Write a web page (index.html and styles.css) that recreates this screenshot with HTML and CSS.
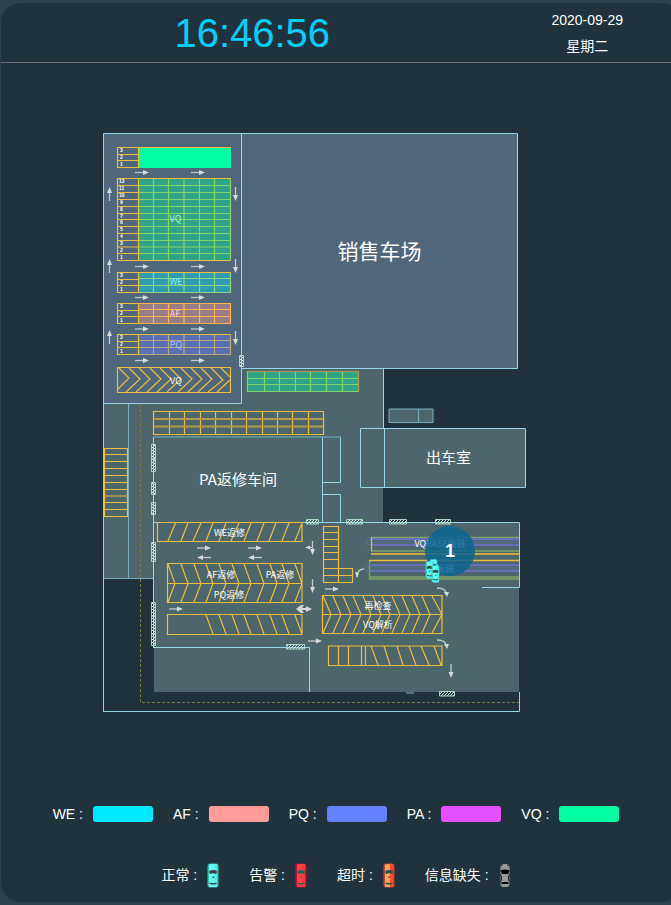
FILE: index.html
```html
<!DOCTYPE html>
<html lang="zh-CN">
<head>
<meta charset="utf-8">
<meta name="viewport" content="width=device-width, initial-scale=1">
<title>停车场监控</title>
<link rel="stylesheet" href="styles.css">
</head>
<body>
<main class="panel">
  <header class="header">
    <time class="clock">16:46:56</time>
    <div class="date"><span>2020-09-29</span><span>星期二</span></div>
  </header>

  <svg class="map" viewBox="1 63 670 727" role="img" aria-label="停车场平面图">
    <defs>
      <pattern id="hatch" width="3" height="3" patternUnits="userSpaceOnUse">
        <path d="M0 3L3 0" stroke="#d6f2df" stroke-width="1"/>
      </pattern>
      <g id="right"><path d="M0 0H9" class="arrow-line"/><path d="M8 -2.500L14 0L8 2.500Z"/></g>
      <g id="turn"><path d="M0 0Q9 0 9 6" class="arrow-line"/><path d="M7 4L12 4L10 9Z"/></g>
      <g id="aisle"><use href="#right" x="135"/><use href="#right" x="191"/></g>
      <g id="nums3"><text x="120" y="5">3</text><text x="120" y="12">2</text><text x="120" y="19">1</text></g>
      <path id="cells" d="M153.500 0V20M168.500 0V20M184 0V20M199.500 0V20M214.500 0V20M139 6.500H231M139 13.500H231"/>
      <path id="stub" d="M117.500 .5H138.500V20.500H117.500ZM117.500 7.500H138.500M117.500 13.500H138.500"/>
      <symbol id="car" viewBox="0 0 12 25">
        <rect x=".5" y=".5" width="11" height="24" rx="2.500" fill="var(--edge)"/>
        <rect x="2" y="1" width="8" height="23" rx="1.500" fill="var(--body)"/>
        <path d="M7 1H10V24H7Z" fill="var(--side)"/>
        <path d="M2 9Q2 7 6 7T10 9L9 11Q6 9.500 3 11Z" fill="var(--glass)"/>
        <path d="M2.500 19.500Q6 20.500 9.500 19.500V21Q6 22 2.500 21Z" fill="var(--glass)"/>
        <rect x="5.500" y="13.500" width="1.500" height="1.500" fill="var(--glass)"/>
      </symbol>
    </defs>

    <!-- floor areas -->
    <path class="lower" d="M104 403H242V368H383V522H519V692H154V578H104Z"/>
    <path class="upper" d="M104 134H517V368H242V403H104Z"/>
    <path class="lower" d="M360.500 428.500H525V488H360.500ZM389 409H433V422H389Z"/>

    <!-- walls -->
    <path class="wall" d="M103.500 711.500V133.500H517.500V368.500H241.500M241.500 134V403.500H104M383.500 368V428M360.500 428.500H525.500V487.500H360.500ZM384.500 428V488M153.500 647V437M322.500 437V522M340.500 437V482.500H323M323 494.500H340.500V522M153 522.500H519.500V587.500H482M153 647.500H309.500V692M103 711.500H519.500V692"/>
    <path class="wall dim" d="M128.500 404V578M104 578.500H153M153 437H341M389 409H433V422.500H389ZM418.500 409V422M406 693H414"/>
    <path class="guide" d="M140.500 404V702.500H519"/>

    <!-- north-west stalls -->
    <path class="vq-solid" d="M139 147H231V168H139Z"/>
    <use href="#stub" y="147" class="line"/>
    <path class="line" d="M139 147.500H231"/>
    <path class="vq" d="M139 178H231V260H139Z"/>
    <path class="line vq-line" d="M153.500 179V260M168.500 179V260M184 179V260M199.500 179V260M214.500 179V260M230.500 179V260M139 185.500H231M139 192.500H231M139 199.500H231M139 206.500H231M139 213.500H231M139 219.500H231M139 226.500H231M139 233.500H231M139 240.500H231M139 247H231M139 253.500H231"/>
    <path class="line" d="M231 178.500H117.500V260.500H231M138.500 178V260M117 185.500H139M117 192.500H139M117 199.500H139M117 206.500H139M117 213.500H139M117 219.500H139M117 226.500H139M117 233.500H139M117 240.500H139M117 247H139M117 253.500H139"/>
    <path class="we" d="M139 272H231V292H139Z"/>
    <use href="#cells" y="272" class="line we-line"/>
    <use href="#stub" y="272" class="line"/><path class="line we-line" d="M139 292.500H230.500V272"/><path class="line" d="M139 272.500H231"/>
    <path class="af" d="M139 303H231V323H139Z"/>
    <use href="#cells" y="303" class="line af-line"/>
    <use href="#stub" y="303" class="line"/><path class="line af-line" d="M139 303.500H230.500V323.500H139"/>
    <path class="pq" d="M139 334H231V355H139Z"/>
    <use href="#cells" y="334" class="line pq-line"/>
    <use href="#stub" y="334" class="line"/><path class="line pq-line" d="M139 354.500H230.500V334"/><path class="line" d="M139 334.500H231"/>
    <path class="line" d="M117.500 367.500H230.500V392.500H117.500ZM119 368L129 378L118 389M129 368L140 379L126 392M139 368L150 379L136 392M150 368L161 379L147 392M160 368L171 379L157 392M170 368L181 379L167 392M181 368L192 379L178 392M191 368L202 379L188 392M201 368L212 379L198 392M211 368L223 380L208 392M221 368L230 377M230 380L217 392"/>
    <g class="number">
      <use href="#nums3" y="147"/><use href="#nums3" y="272"/><use href="#nums3" y="303"/><use href="#nums3" y="334"/>
      <text x="119" y="183">12</text><text x="119" y="190">11</text><text x="119" y="197">10</text>
      <text x="120" y="204">9</text><text x="120" y="211">8</text><text x="120" y="218">7</text>
      <text x="120" y="224">6</text><text x="120" y="231">5</text><text x="120" y="238">4</text>
      <text x="120" y="245">3</text><text x="120" y="252">2</text><text x="120" y="259">1</text>
    </g>

    <!-- middle stalls -->
    <path class="vq" d="M248 372H358V391H248Z"/>
    <path class="line vq-line" d="M264.500 372V391M279.500 372V391M295.500 372V391M310.500 372V391M326.500 372V391M342.500 372V391M248 378.500H358M248 384.500H358M247.500 372V391.500H358"/>
    <path class="line dark" d="M247 371.500H358.500V392"/>
    <path class="line" d="M153.500 411.500H323.500V434.500H153.500ZM169.500 411V434M184.500 411V434M200.500 411V434M215.500 411V434M231.500 411V434M246.500 411V434M262.500 411V434M277.500 411V434M292.500 411V434M308.500 411V434"/>
    <path class="line dark wide" d="M154 419H323M154 426.500H323"/>
    <path class="line" d="M104.500 448.500H127.500V516.500H104.500ZM104 454.500H128M104 461.500H128M104 468.500H128M104 475.500H128M104 482.500H128M104 489.500H128M104 496H128M104 502.500H128M104 509.500H128"/>

    <!-- repair stalls -->
    <path class="line" d="M157.500 522.500H302V541.500H157.500ZM168 541L175.500 523M181 541L188 523M193 541L201 523M206 541L213 523M219 541L226 523M231 541L239 523M244 541L251 523M257 541L264 523M269 541L276 523M282 541L289 523M295 541L302 523"/>
    <path class="line" d="M167.500 563.500H302V602.500H167.500ZM168 583.500H302M168 564L175 583.500L168 602M181 564L188 583.500L181 602M194 564L201 583.500L194 602M206 564L213 583.500L206 602M219 564L226 583.500L219 602M232 564L239 583.500L232 602M244 564L251 583.500L244 602M257 564L264 583.500L257 602M270 564L277 583.500L270 602M282 564L289 583.500L282 602M295 564L302 583.500L295 602"/>
    <path class="line" d="M167.500 614.500H302V634.500H167.500ZM206 615L213 634M219 615L226 634M232 615L239 634M244 615L251 634M257 615L264 634M270 615L277 634M282 615L289 634M295 615L302 634"/>
    <path class="line" d="M323.500 526.500H338.500V582.500H323.500ZM323 532.500H339M323 539.500H339M323 546.500H339M323 552.500H339M323 559.500H339M323 568.500H352.500V582.500H338M323 575.500H352"/>
    <path class="line" d="M322.500 595.500H442V633.500H322.500ZM323 614.500H442M323 596L331 614.500L323 633M333 596L341 614.500L333 633M343 596L351 614.500L343 633M353 596L361 614.500L353 633M363 596L371 614.500L363 633M373 596L381 614.500L373 633M382 596L390 614.500L382 633M392 596L400 614.500L392 633M402 596L410 614.500L402 633M412 596L420 614.500L412 633M422 596L430 614.500L422 633M432 596L442 614.500L432 633"/>
    <path class="line" d="M328.500 646H442V665.500H328.500ZM338.500 646V665M348.500 646V665M361.500 646V665M365.500 646V665M371 646L378 665M384 646L390 665M397 646L403 665M409 646L416 665M421 646L429 665M434 646L441 665"/>

    <!-- conveyor lines -->
    <path class="belt" d="M371 539H519V545H371ZM369 565H519V571H369Z"/>
    <path class="line green" d="M371 537.500H519M371 551H519M369 577H519M369 579H519M369.500 560V579"/>
    <path class="line purple" d="M371 539H519M371 545H519M369 565H519M369 571H519"/>
    <path class="line purple loop" d="M371 539L367 540V544L371 545M369 565L365 566V570L369 571"/>
    <path class="line" d="M371.500 537V551"/>
    <path class="line belt-edge" d="M371 554H519M369 560.500H519"/>

    <!-- doors -->
    <g class="door">
      <path d="M151.500 444.500H155.500V459H151.500ZM151.500 459H155.500V471.500H151.500ZM151.500 482.500H155.500V494.500H151.500ZM151.500 502.500H155.500V514.500H151.500ZM151.500 542.500H155.500V561.500H151.500ZM151.500 602.500H155.500V616H151.500ZM151.500 616H155.500V634H151.500ZM151.500 634H155.500V645.500H151.500ZM239.500 355.500H243.500V366.500H239.500Z"/>
      <path d="M306.500 519.500H318.500V524H306.500ZM346.500 519.500H362.500V524H346.500ZM389.500 519.500H406.500V524H389.500ZM435.500 519.500H450.500V524H435.500ZM286.500 644.500H304.500V649H286.500ZM439.500 691.500H454.500V696H439.500Z"/>
    </g>

    <!-- driving directions -->
    <g class="arrow">
      <use href="#aisle" y="172.500"/><use href="#aisle" y="266.500"/><use href="#aisle" y="297.500"/><use href="#aisle" y="329"/><use href="#aisle" y="360.500"/>
      <use href="#right" transform="translate(109.500 201) rotate(-90)"/>
      <use href="#right" transform="translate(109.500 273) rotate(-90)"/>
      <use href="#right" transform="translate(109.500 344) rotate(-90)"/>
      <use href="#right" transform="translate(235.500 187) rotate(90)"/>
      <use href="#right" transform="translate(235.500 259) rotate(90)"/>
      <use href="#right" transform="translate(235.500 331) rotate(90)"/>
      <use href="#right" x="197" y="548"/><use href="#right" x="248" y="548"/>
      <use href="#right" transform="translate(211 557.500) rotate(180)"/>
      <use href="#right" transform="translate(262 557.500) rotate(180)"/>
      <use href="#right" transform="translate(312.500 541) rotate(90)"/>
      <path d="M312 547.500H309" class="arrow-line"/><path d="M310 545.500L305 547.500L310 549.500Z"/>
      <use href="#right" transform="translate(312.500 579) rotate(90)"/>
      <use href="#right" x="169" y="609"/>
      <path d="M296 609L301 605H304L302 608H306V606L312 609L306 612V610H302L304 613H301Z"/>
      <use href="#right" x="308" y="641"/><use href="#right" x="325" y="589"/>
      <path d="M364 569Q357 569 357 577" class="arrow-line"/><path d="M355 572L359 573L357 578Z"/>
      <use href="#turn" x="437" y="588"/><use href="#turn" x="437" y="640"/>
      <use href="#right" transform="translate(451 664) rotate(90)"/>
    </g>

    <!-- place names -->
    <g class="label">
      <text x="175.500" y="222" class="on-vq">VQ</text><text x="176" y="285" class="on-we">WE</text>
      <text x="175" y="317" class="on-af">AF</text><text x="176" y="348" class="on-pq">PQ</text>
      <text x="176" y="384">VQ</text>
      <text x="229.500" y="536">WE返修</text><text x="221" y="578">AF返修</text><text x="280" y="578">PA返修</text>
      <text x="229" y="598">PQ返修</text><text x="378" y="609">再检查</text><text x="378" y="628">VQ解析</text>
      <text x="440" y="547">VQPASS板链</text><text x="440" y="572">PA板链</text>
      <text x="238" y="485" class="room">PA返修车间</text><text x="448.500" y="463" class="room">出车室</text>
      <text x="379.500" y="259" class="yard">销售车场</text>
    </g>

    <!-- vehicle cluster -->
    <circle class="cluster" cx="450" cy="551" r="25"/>
    <text class="count" x="450" y="557">1</text>
    <g class="ok">
      <use href="#car" x="429" y="559" width="9" height="18"/>
      <use href="#car" x="425" y="561" width="9" height="18"/>
      <use href="#car" x="431" y="565" width="9" height="18"/>
    </g>
  </svg>

  <ul class="legend areas">
    <li>WE :<i class="swatch c-we"></i></li>
    <li>AF :<i class="swatch c-af"></i></li>
    <li>PQ :<i class="swatch c-pq"></i></li>
    <li>PA :<i class="swatch c-pa"></i></li>
    <li>VQ :<i class="swatch c-vq"></i></li>
  </ul>
  <ul class="legend states">
    <li>正常 :<svg class="car ok"><use href="#car"/></svg></li>
    <li>告警 :<svg class="car alarm"><use href="#car"/></svg></li>
    <li>超时 :<svg class="car late"><use href="#car"/></svg></li>
    <li>信息缺失 :<svg class="car" viewBox="0 0 12 25">
      <rect x="1.500" y="1" width="9" height="23" rx="3" fill="#999"/>
      <path d="M2 3L4 1.500M10 3L8 1.500" stroke="#222"/>
      <path d="M1.500 7.500Q6 5.500 10.500 7.500L9 11H3ZM3 19H9L10 21H2Z" fill="#000"/>
      <path d="M1.500 11L2.500 14V17L1.500 19M10.500 11L9.500 14V17L10.500 19" fill="none" stroke="#222"/>
    </svg></li>
  </ul>
</main>
</body>
</html>
```
FILE: styles.css
```css
* { box-sizing: border-box; }

body {
  margin: 0;
  padding: 3px 0 2px 1px;
  overflow-x: hidden;
  background: #2e404c;
  color: #fff;
  font: 14px/26px "Liberation Sans", "Noto Sans CJK SC", sans-serif;
}

/* The panel runs 10px past the right edge of the window. */
.panel {
  margin-right: -10px;
  padding-bottom: 14px;
  border-radius: 20px;
  background: #20333c;
}

.header {
  display: grid;
  grid-template-columns: 3fr 1fr;
  align-items: center;
  height: 60px;
  padding-right: 10px;
  border-bottom: 1px solid #6b6d70;
  text-align: center;
}

.clock { color: #00d0ff; font-size: 40px; }
.date { display: flex; flex-direction: column; }

.map {
  display: block;
  width: calc(100% - 10px);
  font-family: "Noto Sans CJK SC", sans-serif;
}

.upper { fill: #50667a; }
.lower { fill: #4d666b; }
.wall { fill: none; stroke: #93d7e8; }
.wall.dim { stroke: #79b1c0; }
.guide { fill: none; stroke: #81773f; stroke-dasharray: 3 2; }

.vq-solid { fill: #00ffa5; }
.vq { fill: #2fa489; }
.we { fill: #2f9db0; }
.af { fill: #997d85; }
.pq { fill: #5871b0; }
.belt { fill: #56708a; opacity: .5; }

.line { fill: none; stroke: #eebc3f; stroke-width: 1.2; }
.vq-line { stroke: #83d666; }
.we-line { stroke: #8fd384; }
.af-line { stroke: #ffb258; }
.pq-line { stroke: #bda584; }
.dark { stroke: #b6984a; }
.wide { stroke-width: 2; }
.belt-edge { stroke-width: 1.5; }
.green { stroke: #7fa268; stroke-width: 1.5; }
.purple { stroke: #686fb8; stroke-width: 2; }
.loop { stroke-width: 1; stroke-dasharray: 2 1; }

.door path { fill: url(#hatch) #33474d; stroke: #a9d8c5; }
.arrow { fill: #d5dada; }
.arrow-line { fill: none; stroke: #c3cbcd; stroke-width: 1.3; }

.number { fill: #fff; font: bold 5px "Liberation Sans", sans-serif; }
.label { fill: #fff; font-size: 9px; text-anchor: middle; }
.on-vq { fill: #a5f5d8; }
.on-we { fill: #8df0f5; }
.on-af { fill: #ffd0cf; }
.on-pq { fill: #b5c1fa; }
.room { font-size: 15px; }
.yard { font-size: 21px; }

.cluster { fill: #0c6490; opacity: .85; }
.count {
  fill: #fff;
  font: bold 18px "Liberation Sans", sans-serif;
  text-anchor: middle;
}

.legend {
  display: flex;
  justify-content: center;
  margin: 0;
  padding: 0 10px 0 0;
  list-style: none;
}
.legend li { display: flex; align-items: center; gap: 10px; }
.areas { gap: 20px; padding-top: 11px; }
.states { gap: 30px; padding-top: 35px; }

.swatch { width: 60px; height: 16px; border-radius: 3px; }
.c-we { background: #00eaff; }
.c-af { background: #ff9c9a; }
.c-pq { background: #6280ff; }
.c-pa { background: #e44fff; }
.c-vq { background: #00ffa2; }

.car { display: block; width: 12px; height: 25px; }
.ok { --edge: #35bfb5; --body: #62fff5; --side: #52f5ec; --glass: #3c4044; }
.alarm { --edge: #bd123c; --body: #ff3f43; --side: #ff3a40; --glass: #126b58; }
.late { --edge: #c64936; --body: #ffa451; --side: #ff4a3b; --glass: #2d5447; }
```
